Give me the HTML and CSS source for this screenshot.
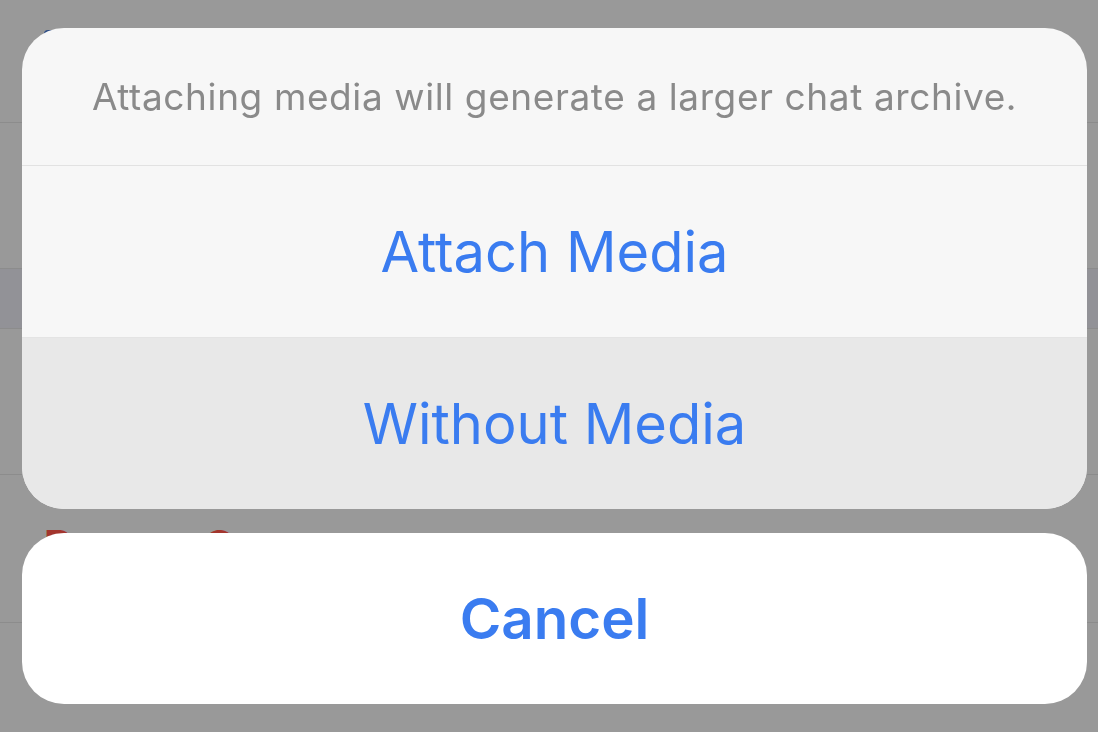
FILE: index.html
```html
<!DOCTYPE html>
<html>
<head>
<meta charset="utf-8">
<link rel="stylesheet" href="styles.css">
</head>
<body>
<div class="under">
  <div class="row r1"><span class="blue-icon"></span></div>
  <div class="row r2"></div>
  <div class="row band"></div>
  <div class="row r3"></div>
  <div class="row r4"><span class="danger">Report Contact</span></div>
  <div class="row r5"></div>
</div>
<div class="overlay">
  <div class="group">
    <div class="title">Attaching media will generate a larger chat archive.</div>
    <div class="action">Attach Media</div>
    <div class="action pressed">Without Media</div>
  </div>
  <div class="cancel">Cancel</div>
</div>
</body>
</html>
```
FILE: styles.css
```css
html, body {
  margin: 0;
  padding: 0;
}
body {
  width: 1098px;
  height: 732px;
  overflow: hidden;
  background: #999999;
  font-family: Inter, "Liberation Sans", sans-serif;
}
.under {
  display: flex;
  flex-direction: column;
}
.row {
  border-bottom: 1px solid #8c8c8c;
  box-sizing: border-box;
}
.r1 { height: 123px; padding: 30px 0 0 44px; }
.blue-icon {
  display: block;
  width: 20px;
  height: 20px;
  border-radius: 4px;
  background: #2d4d86;
}
.r2 { height: 146px; }
.band { height: 60px; background: #929297; }
.r3 { height: 146px; }
.r4 {
  height: 148px;
  padding: 44px 0 0 43px;
}
.danger {
  color: #a3352d;
  font-size: 46px;
  font-weight: 500;
}
.r5 { flex: 1; background: #919195; border-bottom: none; }

.overlay {
  position: fixed;
  top: 28px;
  left: 22px;
  width: 1065px;
  display: flex;
  flex-direction: column;
  gap: 24px;
}
.group {
  background: #f7f7f7;
  border-radius: 42px;
  overflow: hidden;
  display: flex;
  flex-direction: column;
}
.title {
  height: 137px;
  display: flex;
  align-items: center;
  justify-content: center;
  color: #8a8a8a;
  font-size: 37px;
  letter-spacing: 0.6px;
  border-bottom: 1px solid #e2e2e2;
}
.action {
  height: 171px;
  display: flex;
  align-items: center;
  justify-content: center;
  color: #3a7cf0;
  font-size: 56px;
}
.action.pressed {
  background: #e8e8e8;
  height: 172px;
  border-top: 1px solid #e4e4e4;
  box-sizing: border-box;
}
.cancel {
  height: 171px;
  background: #ffffff;
  border-radius: 42px;
  display: flex;
  align-items: center;
  justify-content: center;
  color: #3a7cf0;
  font-size: 56.5px;
  font-weight: 600;
}
```
